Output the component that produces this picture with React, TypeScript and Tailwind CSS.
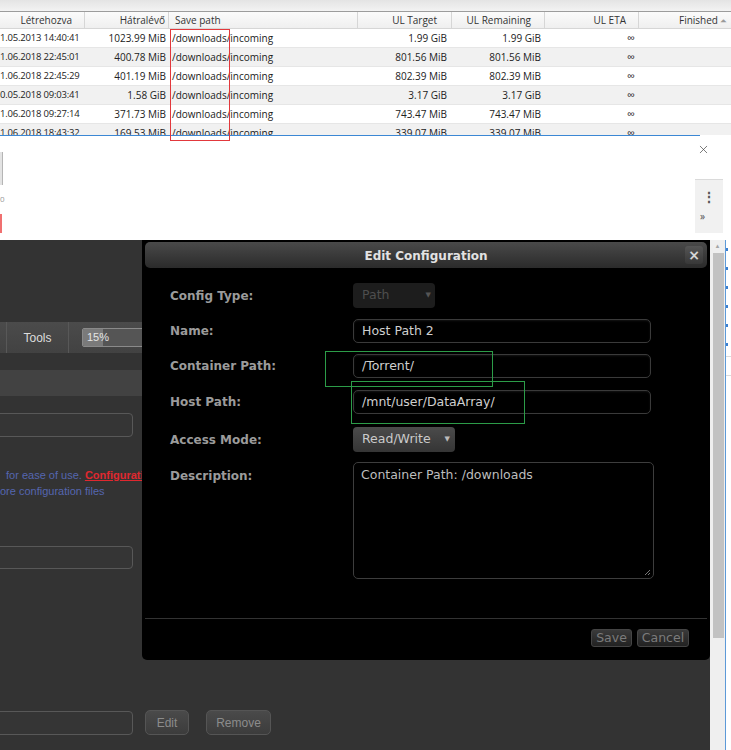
import { X } from 'lucide-react'

interface TorrentRow {
  added: string
  left: string
  target: string
  remaining: string
}

const rows: TorrentRow[] = [
  { added: '1.05.2013 14:40:41', left: '1023.99 MiB', target: '1.99 GiB', remaining: '1.99 GiB' },
  { added: '1.06.2018 22:45:01', left: '400.78 MiB', target: '801.56 MiB', remaining: '801.56 MiB' },
  { added: '1.06.2018 22:45:29', left: '401.19 MiB', target: '802.39 MiB', remaining: '802.39 MiB' },
  { added: '0.05.2018 09:03:41', left: '1.58 GiB', target: '3.17 GiB', remaining: '3.17 GiB' },
  { added: '1.06.2018 09:27:14', left: '371.73 MiB', target: '743.47 MiB', remaining: '743.47 MiB' },
  { added: '1.06.2018 18:43:32', left: '169.53 MiB', target: '339.07 MiB', remaining: '339.07 MiB' },
]

const tableFont = { fontFamily: '"Open Sans", "Noto Sans", sans-serif' }

function TorrentTable() {
  return (
    <div className="text-[10px] text-[#222]" style={tableFont}>
      <div className="h-[12px] bg-gradient-to-b from-[#e4e4e4] to-[#f3f3f3] border-b border-[#9c9c9c]" />
      {/* column headers */}
      <div className="flex h-[17px] bg-gradient-to-b from-[#fbfbfb] to-[#efefef] border-b border-[#d6d6d6] text-[#333]">
        <div className="w-[85px] flex items-center justify-end pr-[12px] border-r border-[#d6d6d6]">Létrehozva</div>
        <div className="w-[84px] flex items-center justify-end pr-[3px] border-r border-[#d6d6d6]">Hátralévő</div>
        <div className="w-[189px] flex items-center pl-[6px] border-r border-[#d6d6d6]">Save path</div>
        <div className="w-[94px] flex items-center justify-end pr-[14px] border-r border-[#d6d6d6]">UL Target</div>
        <div className="w-[93px] flex items-center justify-end pr-[13px] border-r border-[#d6d6d6]">UL Remaining</div>
        <div className="w-[94px] flex items-center justify-end pr-[12px] border-r border-[#d6d6d6]">UL ETA</div>
        <div className="flex-1 flex items-center justify-end pr-[5px] gap-[2px]">
          Finished
          <span className="text-[8px] text-[#999]">⏶</span>
        </div>
      </div>
      {/* rows, last one cut by the panel below */}
      <div className="h-[106px] overflow-hidden">
        {rows.map((r, i) => (
          <div
            key={i}
            className={`flex h-[19px] border-b border-[#e6e6e6] ${i % 2 === 1 ? 'bg-[#f1f1f1]' : 'bg-white'}`}
          >
            <div className="w-[85px] flex items-center pr-[1px] whitespace-nowrap text-[9.5px] tracking-[-0.2px]">{r.added}</div>
            <div className="w-[84px] flex items-center justify-end pr-[3px] whitespace-nowrap">{r.left}</div>
            <div className="w-[189px] flex items-center pl-[3px]">/downloads/incoming</div>
            <div className="w-[94px] flex items-center justify-end pr-[5px]">{r.target}</div>
            <div className="w-[93px] flex items-center justify-end pr-[4px]">{r.remaining}</div>
            <div className="w-[94px] flex items-center justify-end pr-[4px] text-[11px]">∞</div>
            <div className="flex-1" />
          </div>
        ))}
      </div>
      <div className="h-px w-[700px] bg-[#3b87d4]" />
    </div>
  )
}

function BrowserStrip() {
  return (
    <div className="flex justify-between h-[104px] bg-white">
      <div className="flex flex-col">
        <div className="mt-[16px] w-[3px] h-[33px] bg-[#e3e3e3] border-r border-[#b5b5b5]" />
        <div className="mt-[8px] text-[8px] leading-[12px] text-[#999]" style={tableFont}>0</div>
        <div className="mt-[9px] w-[2px] h-[19px] bg-[#f07070]" />
      </div>
      <div className="flex flex-col w-[38px] pt-[7px] pr-[8px]">
        <X className="ml-[4px] w-[13px] h-[13px] text-[#444]" strokeWidth={1.3} />
        <div className="mt-[23px] ml-[2px] h-[54px] bg-[#f1f1f1] border-t border-[#dadada] flex flex-col items-center">
          <span className="mt-[9px] text-[#555] text-[14px] leading-[16px] font-bold">⋮</span>
          <span className="mt-[6px] self-start ml-[5px] text-[#555] text-[10px] leading-[10px]">»</span>
        </div>
      </div>
    </div>
  )
}

function LeftPanel() {
  const box = 'w-[140px] -ml-[7px] rounded-[4px] border border-[#585858] bg-[#353535]'
  return (
    <div
      className="w-[710px] bg-[#333] flex flex-col"
      style={{ fontFamily: '"Liberation Sans", Arial, sans-serif' }}
    >
      <div className="h-[82px]" />
      {/* tab bar */}
      <div className="h-[31px] flex items-center bg-gradient-to-b from-[#4b4b4b] to-[#424242]">
        <div className="w-[7px] h-full border-r border-[#585858]" />
        <div className="w-[62px] h-full flex items-center justify-center text-[12px] text-[#ddd] border-r border-[#585858]">Tools</div>
        <div className="ml-[13px] w-[80px] h-[19px] rounded-[2px] border border-[#8a8a8a] bg-[#555] flex items-center relative overflow-hidden">
          <div className="w-[20px] h-full bg-[#7a7a7a]" />
          <span className="absolute left-[4px] text-[11px] text-[#e5e5e5]">15%</span>
        </div>
      </div>
      <div className="mt-[17px] h-[26px] bg-[#424242]" />
      <div className={`mt-[17px] h-[24px] ${box}`} />
      <div className="mt-[30px] text-[11px] leading-[16px] text-[#5566b0] whitespace-nowrap">
        <div className="ml-[6px]">
          for ease of use. <span className="text-[#e0282f] font-bold underline">Configuration</span>
        </div>
        <div>ore configuration files</div>
      </div>
      <div className={`mt-[47px] h-[23px] ${box}`} />
      <div className="mt-[141px] flex items-center">
        <div className={`h-[24px] ${box}`} />
        <button className="ml-[12px] w-[44px] h-[25px] rounded-[5px] border border-[#555] bg-gradient-to-b from-[#4a4a4a] to-[#3c3c3c] text-[12px] text-[#8c8c8c]">
          Edit
        </button>
        <button className="ml-[17px] w-[65px] h-[25px] rounded-[5px] border border-[#555] bg-gradient-to-b from-[#4a4a4a] to-[#3c3c3c] text-[12px] text-[#8c8c8c]">
          Remove
        </button>
      </div>
    </div>
  )
}

function Field({ label, children, className = '' }: { label: string; children: React.ReactNode; className?: string }) {
  return (
    <div className={`flex items-center ${className}`}>
      <div className="w-[183px] text-[12px] font-bold text-[#9b9b9b]">{label}</div>
      {children}
    </div>
  )
}

const inputCls =
  'w-[298px] h-[24px] rounded-[5px] border border-[#3a3a3a] bg-black shadow-[inset_0_1px_2px_rgba(255,255,255,0.08)] flex items-center pl-[8px] text-[12.5px] text-[#cfcfcf]'

function EditDialog() {
  return (
    <div
      className="absolute left-[142px] top-0 w-[568px] h-[420px] bg-black rounded-b-[5px] flex flex-col"
      style={{ fontFamily: '"DejaVu Sans", Verdana, sans-serif' }}
    >
      <div className="relative mt-[2px] mx-[3px] h-[26px] rounded-[5px] bg-gradient-to-b from-[#4a4a4a] to-[#2b2b2b] flex items-center justify-center">
        <span className="mt-px text-[12px] font-bold text-[#e2e2e2]">Edit Configuration</span>
        <button className="absolute right-[4px] top-[4px] w-[18px] h-[18px] rounded-[3px] bg-gradient-to-b from-[#555] to-[#383838] flex items-center justify-center text-[14px] leading-none font-bold text-[#d5d5d5]">
          ×
        </button>
      </div>

      <div className="pl-[28px] flex flex-col">
        <Field label="Config Type:" className="mt-[15px]">
          <div className="w-[82px] h-[25px] rounded-[4px] bg-[#1d1d1d] flex items-center justify-between pl-[9px] pr-[4px] text-[12.5px] text-[#4e4e4e]">
            Path <span className="text-[7px] text-[#555]">▼</span>
          </div>
        </Field>
        <Field label="Name:" className="mt-[11px]">
          <div className={inputCls}>Host Path 2</div>
        </Field>
        <Field label="Container Path:" className="mt-[11px]">
          <div className={inputCls}>/Torrent/</div>
        </Field>
        <Field label="Host Path:" className="mt-[12px]">
          <div className={inputCls}>/mnt/user/DataArray/</div>
        </Field>
        <Field label="Access Mode:" className="mt-[13px]">
          <div className="w-[102px] h-[25px] rounded-[4px] bg-gradient-to-b from-[#4b4b4b] to-[#353535] flex items-center justify-between pl-[9px] pr-[5px] text-[12.5px] text-[#cacaca]">
            Read/Write <span className="text-[7px] text-[#bbb]">▼</span>
          </div>
        </Field>
        <div className="mt-[10px] flex items-start">
          <div className="w-[183px] pt-[5px] text-[12px] font-bold text-[#9b9b9b]">Description:</div>
          <div className="relative w-[301px] h-[117px] rounded-[5px] border border-[#3d3d3d] bg-black pl-[7px] pt-[3px] text-[12.5px] text-[#bdbdbd]">
            Container Path: /downloads
            <svg className="absolute right-[2px] bottom-[2px]" width="7" height="7" viewBox="0 0 7 7">
              <path d="M1 6L6 1M4 6L6 4" stroke="#777" strokeWidth="1" />
            </svg>
          </div>
        </div>
      </div>

      <div className="mt-auto mx-[3px] border-t border-[#333] pt-[10px] pb-[13px] flex justify-end pr-[18px] gap-[5px]">
        <button className="w-[41px] h-[18px] rounded-[3px] border border-[#444] bg-gradient-to-b from-[#3a3a3a] to-[#222] text-[12.5px] leading-none text-[#7b7b7b]">
          Save
        </button>
        <button className="w-[52px] h-[18px] rounded-[3px] border border-[#444] bg-gradient-to-b from-[#3a3a3a] to-[#222] text-[12.5px] leading-none text-[#7b7b7b]">
          Cancel
        </button>
      </div>
    </div>
  )
}

function Scrollbar() {
  return (
    <div className="flex w-[21px] bg-white">
      <div className="w-[15px] bg-[#efefef] flex flex-col">
        <div className="h-[13px] flex items-center justify-center text-[6px] text-[#a5a5a5]">▲</div>
        <div className="ml-[3px] w-[11px] h-[385px] bg-[#c2c2c2]" />
      </div>
      <div className="w-[6px] border-l border-[#5d9ad8] flex flex-col">
        {[0, 1, 2, 3, 4, 5].map(i => (
          <div key={i} className="h-[19px] flex items-center">
            <div className="w-[2px] h-[3px] bg-[#3b7fd0]" />
          </div>
        ))}
        <div className="mt-[2px] h-[20px] border-y border-[#dcdcdc]" />
      </div>
    </div>
  )
}

export default function App() {
  return (
    <div className="relative w-[731px] h-[750px] overflow-hidden bg-white">
      <TorrentTable />
      <BrowserStrip />
      <div className="relative flex h-[510px]">
        <LeftPanel />
        <Scrollbar />
        <EditDialog />
      </div>

      {/* annotation boxes drawn over the screenshot */}
      <div className="absolute left-[170px] top-[29px] w-[60px] h-[112px] border border-[#e2383c]" />
      <div className="absolute left-[325px] top-[351px] w-[168px] h-[36px] border border-[#2c9c48]" />
      <div className="absolute left-[351px] top-[381px] w-[174px] h-[43px] border border-[#2c9c48]" />
    </div>
  )
}
